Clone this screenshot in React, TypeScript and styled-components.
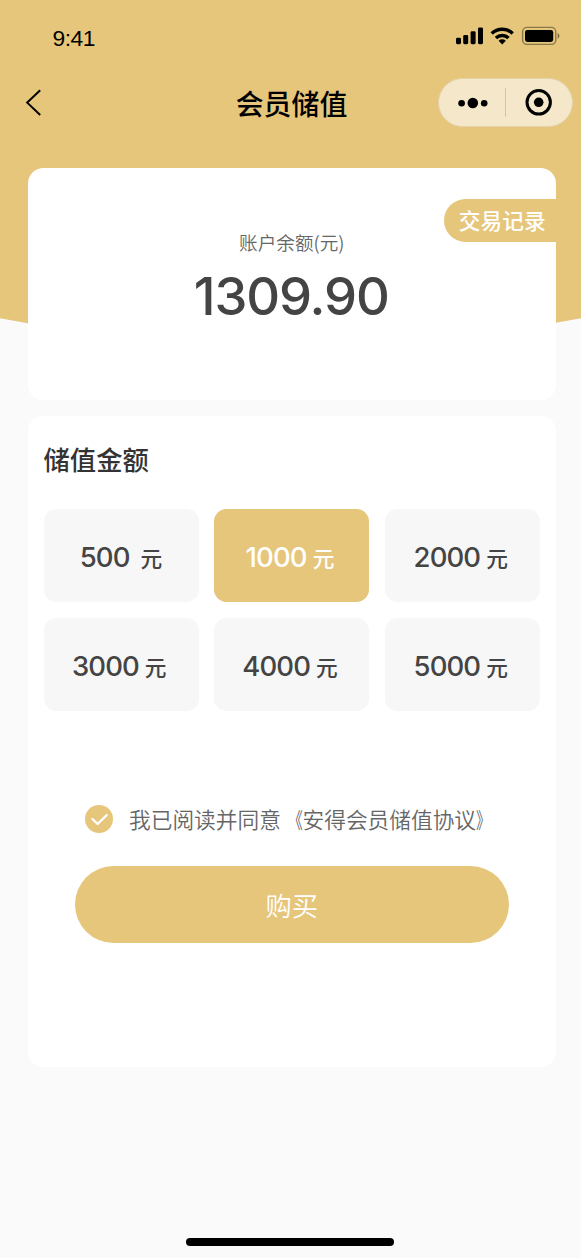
import React, { useState } from "react";
import styled, { createGlobalStyle } from "styled-components";

const gold = "#e6c67b";
const cjk = '"Noto Sans CJK SC", sans-serif';

const GlobalStyle = createGlobalStyle`
  * { box-sizing: border-box; }
  body { margin: 0; background: #fafafa; font-family: ${cjk}; }
  button { border: 0; padding: 0; background: none; font: inherit; color: inherit; cursor: pointer; }
`;

const Screen = styled.div`
  position: relative;
  width: 581px;
  height: 1258px;
  display: flex;
  flex-direction: column;
  overflow: hidden;
  background: #fafafa;
`;

const Backdrop = styled.svg`
  position: absolute;
  top: 0;
  left: 0;
`;

const StatusBar = styled.header`
  position: relative;
  display: flex;
  justify-content: space-between;
  height: 68px;
  padding: 25px 21px 0 52.5px;
`;

const Clock = styled.time`
  font: 22.8px/26px "Liberation Sans", Arial, sans-serif;
  letter-spacing: -0.5px;
  color: #000;
`;

const NavBar = styled.nav`
  position: relative;
  display: grid;
  grid-template-columns: 1fr auto 1fr;
  align-items: center;
  height: 70px;
  padding: 0 8.5px 0 25px;
`;

const BackButton = styled.button`
  justify-self: start;
  display: flex;
`;

const Title = styled.h1`
  margin: 0 14.5px 0 0;
  font-size: 27.9px;
  line-height: 40px;
  font-weight: 500;
  color: #000;
`;

const Capsule = styled.div`
  justify-self: end;
  display: flex;
  align-items: center;
  width: 134.5px;
  height: 49px;
  margin-bottom: 2px;
  border: 1px solid #e3d3ab;
  border-radius: 25px;
  background: #f5e8ca;
`;

const Main = styled.main`
  position: relative;
  display: flex;
  flex-direction: column;
  gap: 16px;
  padding: 30px 25.5px 0 28px;
`;

const Card = styled.section<{ $height: number }>`
  height: ${(p) => p.$height}px;
  border-radius: 15.5px;
  background: #fff;
`;

const BalanceCard = styled(Card)`
  display: flex;
  flex-direction: column;
  align-items: center;
`;

const RecordsButton = styled.button`
  align-self: flex-end;
  width: 111.5px;
  height: 43px;
  margin-top: 31px;
  padding: 0 0 2px 5px;
  border-radius: 21.5px 0 0 21.5px;
  background: ${gold};
  color: #fff;
  font-size: 21.7px;
  line-height: 41px;
  font-weight: 500;
`;

const BalanceLabel = styled.div`
  margin-top: -14px;
  font-size: 18.6px;
  line-height: 28px;
  font-weight: 350;
  color: #666;
`;

const Balance = styled.div`
  margin-top: 8px;
  padding-right: 1px;
  font: 550 52.5px/64px Inter, sans-serif;
  letter-spacing: -1.1px;
  color: #444;
`;

const TopUpCard = styled(Card)`
  display: flex;
  flex-direction: column;
  padding: 23px 15.5px 0;
`;

const SectionTitle = styled.h2`
  margin: 0;
  font-size: 26.35px;
  line-height: 40px;
  font-weight: 500;
  color: #333;
`;

const AmountGrid = styled.div`
  display: grid;
  grid-template-columns: repeat(3, 155px);
  justify-content: space-between;
  row-gap: 15.5px;
  margin-top: 30px;
`;

const AmountOption = styled.button<{ $selected: boolean; $short: boolean }>`
  display: flex;
  align-items: baseline;
  justify-content: center;
  gap: ${(p) => (p.$short ? 11 : 6)}px;
  height: 93px;
  padding: 2px ${(p) => (p.$short ? 0 : 3.5)}px 0 0;
  border-radius: 12.4px;
  background: ${(p) => (p.$selected ? gold : "#f7f7f7")};
  color: ${(p) => (p.$selected ? "#fff" : "#444")};
`;

const AmountValue = styled.span`
  font: 500 27.5px/93px Inter, sans-serif;
  letter-spacing: -0.9px;
`;

const AmountUnit = styled.span`
  font-size: 21.7px;
  line-height: 30px;
  font-weight: 500;
`;

const Agreement = styled.label`
  display: flex;
  align-items: center;
  gap: 16px;
  height: 32px;
  margin: 92px 0 0 41.5px;
  font-size: 21.7px;
  font-weight: 350;
  color: #666;
  white-space: nowrap;
`;

const Bracket = styled.span<{ $side: "left" | "right" }>`
  display: inline-block;
  transform: scaleX(0.68);
  transform-origin: ${(p) => (p.$side === "left" ? "right" : "left")} center;
`;

const BuyButton = styled.button`
  width: 434.5px;
  height: 77.5px;
  margin: 31px 0 0 31px;
  padding-top: 1px;
  border-radius: 39px;
  background: ${gold};
  color: #fff;
  font-size: 26.35px;
  font-weight: 350;
`;

const HomeIndicator = styled.div`
  align-self: center;
  width: 208px;
  height: 8px;
  margin: auto 1px 12px 0;
  border-radius: 4px;
  background: #000;
`;

const amounts = [500, 1000, 2000, 3000, 4000, 5000];

function StatusIcons() {
  return (
    <svg width="104" height="20" viewBox="456 25 104 20">
      <rect x="456" y="37.8" width="5" height="6.4" rx="1.4" />
      <rect x="463.2" y="35" width="5" height="9.2" rx="1.4" />
      <rect x="470.6" y="31.2" width="5" height="13" rx="1.4" />
      <rect x="478" y="27.4" width="5" height="16.8" rx="1.4" />
      <g fill="none" stroke="#000" strokeWidth="3.5">
        <path d="M491.7 33.4a15.2 15.2 0 0 1 21 0" />
        <path d="M495.9 38a9.2 9.2 0 0 1 12.6 0" />
      </g>
      <path d="M502.2 44.4l-3.6-3.7a5.2 5.2 0 0 1 7.2 0z" />
      <rect x="522.6" y="27.4" width="33.2" height="17" rx="4.4" fill="none" stroke="#000" strokeOpacity=".4" strokeWidth="1.4" />
      <rect x="525" y="29.9" width="28.2" height="12" rx="2.4" />
      <path d="M557.6 33c2.4 1 2.4 4.8 0 5.8z" fillOpacity=".45" />
    </svg>
  );
}

export default function App() {
  const [selected, setSelected] = useState(1000);

  return (
    <>
      <GlobalStyle />
      <Screen>
        <Backdrop width="581" height="370" viewBox="0 0 581 370">
          <path d="M0 0H581V318.3Q290.5 374 0 318.3Z" fill={gold} />
        </Backdrop>
        <StatusBar>
          <Clock>9:41</Clock>
          <StatusIcons />
        </StatusBar>
        <NavBar>
          <BackButton aria-label="返回">
            <svg width="18" height="28" viewBox="25 89 18 28">
              <path d="M40.2 90.2L27.2 102.6L40.2 115" fill="none" stroke="#000" strokeWidth="2" />
            </svg>
          </BackButton>
          <Title>会员储值</Title>
          <Capsule>
            <svg width="132" height="47" viewBox="439 79 132 47">
              <circle cx="461.6" cy="103.2" r="3.3" />
              <circle cx="472.8" cy="103" r="5.3" />
              <circle cx="484.2" cy="103.2" r="3.3" />
              <path d="M505.5 88V116.5" stroke="#d3c49f" />
              <circle cx="538.7" cy="102.3" r="11.7" fill="none" stroke="#000" strokeWidth="3" />
              <circle cx="538.7" cy="102.3" r="4.8" />
            </svg>
          </Capsule>
        </NavBar>
        <Main>
          <BalanceCard $height={232}>
            <RecordsButton>交易记录</RecordsButton>
            <BalanceLabel>账户余额(元)</BalanceLabel>
            <Balance>1309.90</Balance>
          </BalanceCard>
          <TopUpCard $height={651}>
            <SectionTitle>储值金额</SectionTitle>
            <AmountGrid>
              {amounts.map((value) => (
                <AmountOption
                  key={value}
                  $selected={value === selected}
                  $short={value < 1000}
                  onClick={() => setSelected(value)}
                >
                  <AmountValue>{value}</AmountValue>
                  <AmountUnit>元</AmountUnit>
                </AmountOption>
              ))}
            </AmountGrid>
            <Agreement>
              <svg width="28" height="28" viewBox="0 0 28 28">
                <circle cx="14" cy="14" r="14" fill={gold} />
                <path d="M7.4 14L12.6 19L21.8 10" fill="none" stroke="#fff" strokeWidth="2.4" strokeLinecap="round" strokeLinejoin="round" />
              </svg>
              <span>
                我已阅读并同意<Bracket $side="left">《</Bracket>安得会员储值协议<Bracket $side="right">》</Bracket>
              </span>
            </Agreement>
            <BuyButton>购买</BuyButton>
          </TopUpCard>
        </Main>
        <HomeIndicator />
      </Screen>
    </>
  );
}
